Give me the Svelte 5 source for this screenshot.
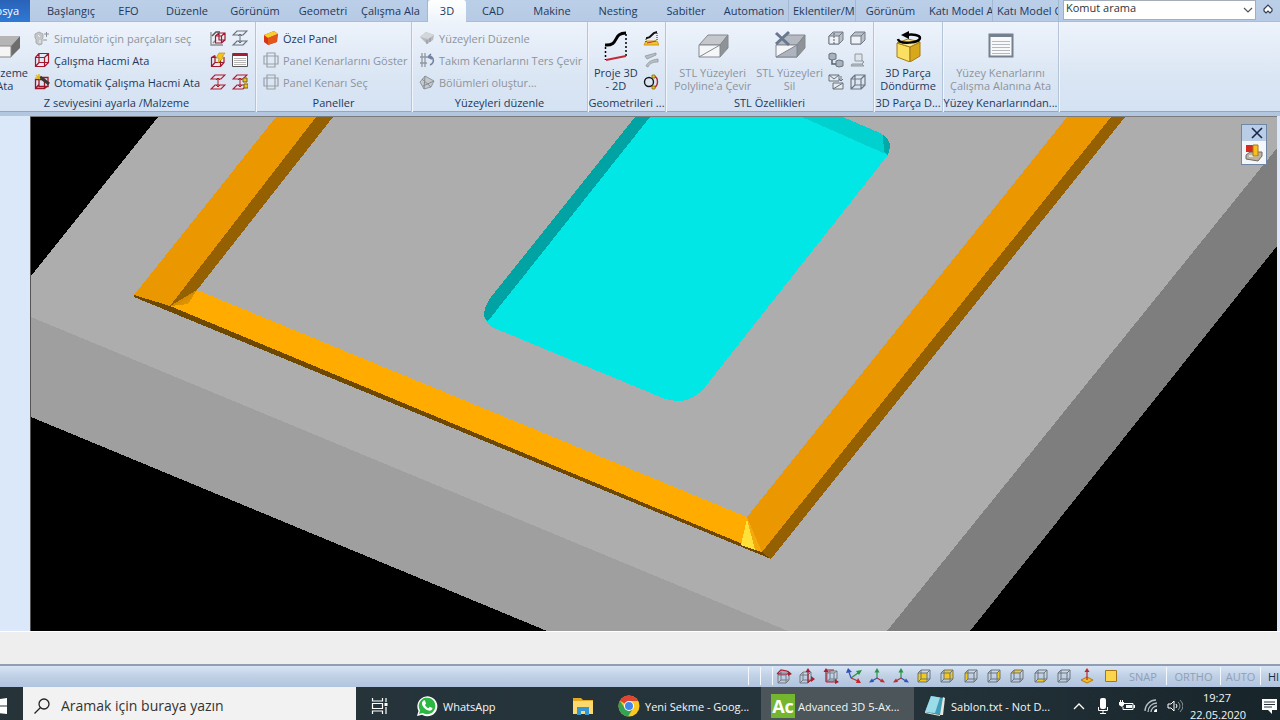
<script>
  const tabs = [
    'Başlangıç', 'EFO', 'Düzenle', 'Görünüm', 'Geometri', 'Çalışma Ala', '3D', 'CAD', 'Makine', 'Nesting',
    'Sabitler', 'Automation', 'Eklentiler/M', 'Görünüm', 'Katı Model A', 'Katı Model O'
  ];
  const divided = [5, 11, 12, 14, 15];
  const clipped = [5, 12, 14, 15];
  const materialRows = [
    { icon: 'simulator', label: 'Simulatör için parçaları seç', off: true },
    { icon: 'redcube', label: 'Çalışma Hacmi Ata' },
    { icon: 'autocube', label: 'Otomatik Çalışma Hacmi Ata' }
  ];
  const materialTools = [
    ['wizard', 'Hacim sihirbazı'], ['zgrey', 'Z seviyesi'], ['flashcube', 'Hızlı hacim'],
    ['list', 'Liste'], ['zred', 'Z seviyesi ata'], ['zkey', 'Z seviyesi düzenle']
  ];
  const panelRows = [
    { icon: 'panel', label: 'Özel Panel' },
    { icon: 'edges', label: 'Panel Kenarlarını Göster', off: true },
    { icon: 'edges', label: 'Panel Kenarı Seç', off: true }
  ];
  const surfaceRows = [
    { icon: 'surface', label: 'Yüzeyleri Düzenle', off: true },
    { icon: 'reverse', label: 'Takım Kenarlarını Ters Çevir', off: true },
    { icon: 'split', label: 'Bölümleri oluştur...', off: true }
  ];
  const geoTools = [['geo1', 'Yüzeye yansıt'], ['geo2', 'Yüzey eğrisi'], ['geo3', 'Kontur']];
  const stlTools = [
    ['stl1', 'STL böl'], ['stl2', 'STL kutu'], ['stl3', 'STL taşı'],
    ['stl4', 'STL gölge'], ['stl5', 'STL aktar'], ['stl6', 'STL tel kafes']
  ];
  const views = ['rot1', 'rot2', 'rot3', 'ax1', 'ax2', 'ax3', 'front', 'back', 'left', 'right', 'top', 'bottom', 'wire', 'normal', 'flat'];
  const faces = {
    front: '2,5 11,5 11,14 2,14', back: '5,2 14,2 14,11 5,11', left: '2,5 5,2 5,11 2,14',
    right: '11,5 14,2 14,11 11,14', top: '2,5 5,2 14,2 11,5', bottom: '2,14 5,11 14,11 11,14'
  };
</script>

{#snippet cube(color, fill)}
  {#if fill}<polygon points={fill} fill="#f3c91b" />{/if}
  <path d="M2 5h9v9H2zM5 2h9v9H5zM2 5l3-3M11 5l3-3M11 14l3-3M2 14l3-3" fill="none" stroke={color} />
{/snippet}

{#snippet axis(up, left, right)}
  <path d="M8 10V3" stroke={up} stroke-width="1.200" /><path d="M5.500 4.500L8 0l2.500 4.500z" fill={up} />
  <path d="M8 10l-5 3" stroke={left} stroke-width="1.200" /><path d="M0 14.500l3-4 2 3.500z" fill={left} />
  <path d="M8 10l5 3" stroke={right} stroke-width="1.200" /><path d="M16 14.500l-3-4-2 3.500z" fill={right} />
{/snippet}

{#snippet icon(name)}
  <svg class="i16" viewBox="0 0 16 16" aria-hidden="true">
    {#if name === 'simulator'}
      <path d="M1 4l4-2 4 2v4l-1 1v5l-3 1-3-2V9L1 8z" fill="#c4c6c8" stroke="#a9adb1" />
      <path d="M4 5l2 2M6 10v3" stroke="#f3f4f5" /><path d="M10 4h5M12.500 2v5M9 10h4" stroke="#8d9298" />
    {:else if name === 'redcube'}
      <path d="M1.500 5.500h9v9h-9zM5 1.500h9.500v9H5zM1.500 5.500l3.500-4M10.500 5.500l4-4M10.500 14.500l4-4M1.500 14.500l3.500-4" fill="none" stroke="#a3182c" stroke-width="1.200" />
    {:else if name === 'autocube'}
      <path d="M1.500 5.500h9v9h-9zM5 3.500h9v9H5zM10.500 14.500l4-3M1.500 14.500l3.500-4" fill="none" stroke="#9c1629" stroke-width="1.300" /><path d="M6 3l9 7" stroke="#3a3a32" stroke-width="3" /><path d="M2 1l4 4M5 0v5M1 4h5" stroke="#e6b719" stroke-width="1.500" />
    {:else if name === 'wizard'}
      <path d="M1 2v13h12M3 13l3-3" fill="none" stroke="#8b8f94" stroke-width="1.300" />
      <path d="M5.500 6h6v7h-6zM9 3h6v7H9zM5.500 6L9 3M11.500 6L15 3M11.500 13l3.500-3" fill="none" stroke="#a3182c" stroke-width="1.200" /><path d="M2 6l4-4h4" fill="none" stroke="#555" stroke-width="1.500" />
    {:else if name === 'flashcube'}
      <path d="M1.500 5.500h9v9h-9zM5 3.500v7h9M1.500 5.500l3.500-2M10.500 14.500l3.500-4V5M1.500 14.500l3.500-4" fill="none" stroke="#a3182c" stroke-width="1.200" /><path d="M9 1h6l-3 4h2L8 11l1-5H6z" fill="#f4c51c" stroke="#b98700" stroke-width=".6" />
    {:else if name === 'zgrey' || name === 'zred' || name === 'zkey'}
      {@const c = name === 'zgrey' ? '#68727d' : '#b01c2e'}
      <path d="M5 1h10l-4 4H1zM5 11h10l-4 4H1z" fill="none" stroke={c} stroke-width="1.200" /><path d="M8 4v9M6 6l2-2 2 2M6 11l2 2 2-2" fill="none" stroke={c} />
      {#if name === 'zkey'}<path d="M11 4h4v4h-4zM12 10h4v4h-4z" fill="#f2c21d" stroke="#7d611a" />{/if}
    {:else if name === 'list'}
      <path d="M.5 1.500h15v13H.5z" fill="#fff" stroke="#555" /><path d="M1 1h14v3H1z" fill="#a51d31" /><path d="M2 6.500h12M2 8.500h12M2 10.500h12M2 12.500h12" stroke="#b5b5b5" />
    {:else if name === 'panel'}
      <path d="M1 5l10-4 4 3-1 8-9 3-4-3z" fill="#d8331b" /><path d="M1 5l10-4 4 3-10 4z" fill="#f6cf2a" /><path d="M14.500 4l-1 8-8.500 3V8z" fill="#e4571b" />
    {:else if name === 'edges'}
      <path d="M4 1h8v14H4zM1 4h14v8H1z" fill="none" stroke="#9aa1a8" stroke-width="1.200" />
    {:else if name === 'surface'}
      <path d="M1 7l6-5 8 3-1 5-6 4z" fill="#b5babf" /><path d="M1 7l6-5 8 3-6 4z" fill="#d4d7da" /><path d="M8 10v4M11 8v4" stroke="#8e949b" />
    {:else if name === 'reverse'}
      <path d="M3 1v14M6 1v14M1 5h7M1 11h7" stroke="#9097a0" stroke-width="1.300" /><path d="M9 5c5-3 8 6 2 8M12 2L9 5l4 2" fill="none" stroke="#7484a5" stroke-width="1.700" />
    {:else if name === 'split'}
      <path d="M1 8l5-6 9 5-3 6-7 2z" fill="#c5c9cc" stroke="#91979d" /><path d="M6 2l-1 13M3 5l9 8M15 7l-11 5" stroke="#858c94" fill="none" />
    {:else if name === 'geo1'}
      <path d="M3 11h11l2 4H1z" fill="#f4c335" stroke="#cf9a15" /><path d="M3 8c6 1 4-5 11-6" fill="none" stroke="#111" stroke-width="2" /><path d="M3 9v4M14 3v8" stroke="#222" stroke-dasharray="1 1" /><path d="M4 13l9-2" stroke="#c32" />
    {:else if name === 'geo2'}
      <path d="M2 4l11-3v2L4 7zM3 14c2-4 5-6 12-7v3c-5 0-8 1-10 5z" fill="#b9c0c6" stroke="#8f979e" stroke-width=".8" />
    {:else if name === 'geo3'}
      <circle cx="6" cy="8" r="4.500" fill="none" stroke="#151515" stroke-width="1.400" /><path d="M10 2c6 1 6 10 0 12" fill="none" stroke="#b7282d" stroke-width="1.400" /><path d="M9 1h3v3H9zM9 12h3v3H9z" fill="#f5bd22" stroke="#7b5b12" stroke-width=".7" />
    {:else if name === 'stl1' || name === 'stl2'}
      <path d="M1 6l4-4h10v8l-4 4H1z" fill="#b9c0c8" stroke="#727b86" /><path d="M1 6h10v8H1z" fill="#eef2f6" stroke="#727b86" /><path d="M11 6l4-4" stroke="#727b86" />{#if name === 'stl1'}<path d="M6 3v12" stroke="#555e69" stroke-dasharray="2 1" />{/if}
    {:else if name === 'stl3'}
      <path d="M1 2l3-1 4 1v5L4 8 1 7zM8 9l3-1 4 1v5l-4 1-3-1z" fill="#a8b2bf" stroke="#68727e" /><path d="M4 8v4h4" fill="none" stroke="#56616d" stroke-width="1.500" />
    {:else if name === 'stl4'}
      <path d="M5 2h7v7H5z" fill="#dfe4e8" stroke="#9299a1" /><path d="M2 12h10l2 2H1zM12 8l2 2-2 2" fill="#bbc2c9" stroke="#9299a1" />
    {:else if name === 'stl5'}
      <path d="M1 1h10v6H1zM1 1l5 4 5-4M5 9h10v6H5zM5 15l10-6M13 2v5M11 5l2 2 2-2" fill="#e7ebf0" stroke="#66707b" />
    {:else if name === 'stl6'}
      <path d="M1 5h10v10H1zM5 1h10v10H5zM1 5l4-4M11 5l4-4M11 15l4-4M1 15l4-4" fill="none" stroke="#6f7883" stroke-width="1.200" />
    {:else if name === 'rot1'}
      <path d="M2 7h8v8H2zM5 4h8v8H5zM2 7l3-3M10 7l3-3M10 15l3-3M2 15l3-3" fill="none" stroke="#747b82" /><path d="M1 6l4-4 6 1 3 2M1 6h12" fill="none" stroke="#a91f30" stroke-width="1.200" /><path d="M12 3l4 3-4 2z" fill="#a91f30" />
    {:else if name === 'rot2'}
      <path d="M1 7h8v8H1zM4 4h8v8H4zM1 7l3-3M9 7l3-3M9 15l3-3M1 15l3-3" fill="none" stroke="#747b82" /><path d="M9 15V3M9 14l5-3" fill="none" stroke="#a91f30" stroke-width="1.200" /><path d="M6.500 4L9 0l2.500 4zM12 8l4 3-4 3z" fill="#a91f30" />
    {:else if name === 'rot3'}
      <path d="M4 5h7v8H4zM7 3h7v8H7zM4 5l3-2M11 5l3-2M11 13l3-2M4 13l3-2" fill="none" stroke="#747b82" /><path d="M3 14V2h8M3 14h10" fill="none" stroke="#a91f30" stroke-width="1.200" /><path d="M.5 4L3 0l2.500 4zM12 11l4 3-4 2z" fill="#a91f30" />
    {:else if name === 'ax1'}
      <path d="M5 10L3 4" stroke="#3450ba" stroke-width="1.200" /><path d="M0 5l2-5 4 4z" fill="#3450ba" /><path d="M5 10l7-5" stroke="#279343" stroke-width="1.200" /><path d="M10 3l6-1-3 5z" fill="#279343" /><path d="M5 10l7 3" stroke="#c12a31" stroke-width="1.200" /><path d="M12 10l3 5-5 0z" fill="#c12a31" />
    {:else if name === 'ax2'}
      {@render axis('#279343', '#3450ba', '#c12a31')}
    {:else if name === 'ax3'}
      {@render axis('#279343', '#c12a31', '#3450ba')}
    {:else if name === 'normal'}
      <path d="M2 12l6-3 6 3-6 3z" fill="#f5bc28" stroke="#b87516" /><path d="M8 12V3" stroke="#b52a27" stroke-width="1.200" /><path d="M5.500 4L8 0l2.500 4z" fill="#b52a27" />
    {:else if name === 'flat'}
      <path d="M2.500 2.500h11v11h-11z" fill="#fbd54b" stroke="#a37616" />
    {:else}
      {@render cube('#6d747b', faces[name])}
    {/if}
  </svg>
{/snippet}

{#snippet rows(list)}
  <div class="rows">
    {#each list as r}
      <button class="row" disabled={r.off}>{@render icon(r.icon)}<span>{r.label}</span></button>
    {/each}
  </div>
{/snippet}

{#snippet tools(list, off)}
  <div class="tools" class:two={list.length > 3}>
    {#each list as t}
      <button aria-label={t[1]} disabled={off}>{@render icon(t[0])}</button>
    {/each}
  </div>
{/snippet}

{#snippet block(c)}
  <path d="M2 15l9-10h20l-8 10z" fill={c} stroke="#84898f" /><path d="M23 15l8-10v13l-8 9z" fill="#8f9398" stroke="#84898f" /><path d="M2 15h21v12H2z" fill="#f4f6f8" stroke="#84898f" />
{/snippet}

<div class="app">
  <nav class="tabs">
    <div class="file"><button>Dosya</button></div>
    {#each tabs as t, i}
      <button class="tab" class:active={t === '3D'} class:divided={divided.includes(i)} class:clip={clipped.includes(i)}>{t}</button>
    {/each}
    <div class="search">
      <input aria-label="Komut arama" placeholder="Komut arama" />
      <svg viewBox="0 0 10 10" aria-hidden="true"><path d="M1 3l4 4 4-4" fill="none" stroke="#555" stroke-width="1.200" /></svg>
    </div>
    <button class="fold" aria-label="Şeridi daralt">
      <svg viewBox="0 0 10 10"><path d="M1 5l4-4 4 4v2L7 9 5 7 3 9 1 7z" fill="#fff" stroke="#334056" stroke-width="1.200" /></svg>
    </button>
  </nav>

  <div class="ribbon">
    <section class="group g1">
      <div class="body">
        <div class="cut">
          <button class="big">
            <svg class="i32" viewBox="0 0 32 32"><path d="M0 16l10-10h21l-9 10z" fill="#b5b5b5" /><path d="M22 16l9-10v12l-9 9z" fill="#6d6d6d" /><path d="M0 16h22v11H0z" fill="#f5f5f5" stroke="#888" /></svg>
            <span>Malzeme<br />Ata</span>
          </button>
        </div>
        {@render rows(materialRows)}
        {@render tools(materialTools)}
      </div>
      <h2>Z seviyesini ayarla /Malzeme</h2>
    </section>
    <section class="group g2"><div class="body">{@render rows(panelRows)}</div><h2>Paneller</h2></section>
    <section class="group g3"><div class="body">{@render rows(surfaceRows)}</div><h2>Yüzeyleri düzenle</h2></section>
    <section class="group g4">
      <div class="body">
        <button class="big">
          <svg class="i32" viewBox="0 0 32 32"><path d="M5 15c15 1 7-12 21-12" fill="none" stroke="#000" stroke-width="3" /><path d="M5.500 17v13M26 4v22" stroke="#000" stroke-width="1.500" stroke-dasharray="2 2" /><path d="M6 30l20-4" stroke="#c32a36" stroke-width="2" /></svg>
          <span>Proje 3D<br />- 2D</span>
        </button>
        {@render tools(geoTools)}
      </div>
      <h2>Geometrileri ...</h2>
    </section>
    <section class="group g5">
      <div class="body">
        <button class="big" disabled>
          <svg class="i32" viewBox="0 0 32 32">{@render block('#c4c8cc')}<path d="M2 27l21-12" stroke="#84898f" /></svg>
          <span>STL Yüzeyleri<br />Polyline'a Çevir</span>
        </button>
        <button class="big" disabled>
          <svg class="i32" viewBox="0 0 32 32">{@render block('#b5bac2')}<path d="M2 27l21-12v12z" fill="#aeb4bd" stroke="#7f8793" /><path d="M2 3l13 12M15 2L2 14" stroke="#69778f" stroke-width="3" /></svg>
          <span>STL Yüzeyleri<br />Sil</span>
        </button>
        {@render tools(stlTools, true)}
      </div>
      <h2>STL Özellikleri</h2>
    </section>
    <section class="group g6">
      <div class="body">
        <button class="big">
          <svg class="i32" viewBox="0 0 32 32"><path d="M5 13l13 4v15L5 27z" fill="#fbdf62" stroke="#a37c12" /><path d="M18 17l10-5v14l-10 6z" fill="#d9a81a" stroke="#a37c12" /><path d="M5 13l11-4 12 3-10 5z" fill="#fdeb9a" stroke="#a37c12" /><path d="M6 9c1 6 22 4 22-1 0-3-7-4-14-3" fill="none" stroke="#000" stroke-width="2.500" /><path d="M9 5l8-4v8z" fill="#000" /></svg>
          <span>3D Parça<br />Döndürme</span>
        </button>
      </div>
      <h2>3D Parça D...</h2>
    </section>
    <section class="group g7">
      <div class="body">
        <button class="big" disabled>
          <svg class="i32" viewBox="0 0 32 32"><path d="M4.500 4.500h23v22h-23z" fill="#f7f9fa" stroke="#77808e" stroke-width="2" /><path d="M4 4h24v3H4z" fill="#77808e" /><path d="M7 11.500h18M7 14.500h18M7 17.500h18M7 20.500h18M7 23.500h18" stroke="#b5b9bd" /></svg>
          <span>Yüzey Kenarlarını<br />Çalışma Alanına Ata</span>
        </button>
      </div>
      <h2>Yüzey Kenarlarından...</h2>
    </section>
  </div>

  <main class="work">
    <svg class="scene" viewBox="31 117 1246 514" preserveAspectRatio="xMinYMin slice" role="img" aria-label="3D parça görünümü">
      <defs>
        <linearGradient id="wedge" x1="0" y1="0" x2="1" y2="1"><stop offset="0" stop-color="#b27400" /><stop offset="1" stop-color="#f2a100" /></linearGradient>
      </defs>
      <path d="M31 117h1246v514H31z" fill="#000" />
      <path d="M158 117H1277V148L887 631H788L31 317V276z" fill="#adadad" />
      <path d="M31 317L788 631H547L31 417z" fill="#9f9f9f" />
      <path d="M1277 148V246L970 631H887z" fill="#7e7e7e" />
      <path d="M134 295L170 306 762 552 771 559 134 297z" fill="#6f4800" />
      <path d="M276 117H316L181 294 170 306 134 295z" fill="#eb9800" />
      <path d="M316 117H333L197 290 170 306z" fill="#946000" />
      <path d="M197 290L747 517 762 552 170 306z" fill="#ffab00" />
      <path d="M197 290L188 304 170 306z" fill="url(#wedge)" />
      <path d="M1067 117H1111L762 552 747 517z" fill="#eb9800" />
      <path d="M1111 117H1125L771 559 762 552z" fill="#946000" />
      <path d="M747 517L762 552 755 550z" fill="#f3a80b" />
      <path d="M747 519L741 545 755 550z" fill="#ffe13a" />
      <path d="M635 117H843L880 133Q890 138 890 147L888 155 705 387Q693 401 680 401 668 401 658 396L494 328Q484 324 484 313 485 305 491 297z" fill="#00e7e5" />
      <path d="M635 117H650L488 321Q484 319 484 313 485 305 491 297z" fill="#00a3a3" />
      <path d="M802 117H843L880 133Q890 138 890 147L888 155z" fill="#00d0ce" />
      <path d="M883 135Q890 139 890 147L888 155 884 152z" fill="#00aaa9" />
    </svg>
    <div class="float">
      <button aria-label="Kapat"><svg viewBox="0 0 12 12"><path d="M1 1l10 10M11 1L1 11" stroke="#17294a" stroke-width="1.600" /></svg></button>
      <button aria-label="Simülasyon">
        <svg viewBox="0 0 18 18"><path d="M1 11l4-3h12v4l-4 5-12-2z" fill="#b9b3a5" stroke="#716b5f" /><path d="M4 11h9v2H4z" fill="#e8e2d2" /><path d="M1 1h8v7H1z" fill="#d62a22" /><path d="M8 1h5v11H8z" fill="#f5bf22" stroke="#ad7710" /></svg>
      </button>
    </div>
  </main>

  <div class="prompt"></div>

  <footer class="status">
    <i></i><i></i>
    <div class="views">
      {#each views as v}<button aria-label={v}>{@render icon(v)}</button>{/each}
    </div>
    <button class="mode snap">SNAP</button>
    <button class="mode ortho">ORTHO</button>
    <button class="mode auto">AUTO</button>
    <button class="mode hilite">HIDE</button>
  </footer>

  <div class="taskbar">
    <button class="start" aria-label="Başlat"><svg viewBox="0 0 16 16"><path d="M0 2l7-1v6.500H0zM8 1l8-1v7.500H8zM0 8.500h7V15l-7-1zM8 8.500h8V16l-8-1z" fill="#fff" /></svg></button>
    <label class="find">
      <svg viewBox="0 0 16 16" aria-hidden="true"><circle cx="10" cy="6" r="5" fill="none" stroke="#222" stroke-width="1.300" /><path d="M6.500 9.500L.5 15.500" stroke="#222" stroke-width="1.300" /></svg>
      <input placeholder="Aramak için buraya yazın" aria-label="Aramak için buraya yazın" />
    </label>
    <button class="view" aria-label="Görev görünümü"><svg viewBox="0 0 17 16"><path d="M1.500 0v3h10V0M1.500 5.500h10v5h-10zM1.500 16v-3h10v3M15 0v4M15 9v7" fill="none" stroke="#fff" stroke-width="1.200" /><path d="M13.500 5h3v3h-3z" fill="#fff" /></svg></button>
    <button class="task whatsapp">
      <svg viewBox="0 0 22 22"><path d="M1 21l1.500-5A10 10 0 1 1 6 19.800z" fill="#fff" /><path d="M3 19l1-3.600A8.300 8.300 0 1 1 6.600 18z" fill="#2bb741" /><path d="M7 6c1-1 2-1 2.500 1l.5 1.500-1 1.500c1 2 2 2.500 3.500 3.200l1.300-1.400 2.700 1.200c0 2-2 3-4 2.500-4-1-7-5-6.500-8z" fill="#fff" /></svg>
      <span>WhatsApp</span>
    </button>
    <button class="task folder" aria-label="Dosya Gezgini">
      <svg viewBox="0 0 22 22"><path d="M1 3h8l2 2h10v14H1z" fill="#e5a823" /><path d="M1 6h20v13H1z" fill="#fbd96c" /><path d="M5 20v-8h12v8h-4v-4H9v4z" fill="#3595d5" /></svg>
    </button>
    <button class="task chrome">
      <svg viewBox="0 0 22 22"><circle cx="11" cy="11" r="10.500" fill="#fbc924" /><path d="M11 11L1.900 5.700A10.500 10.500 0 0 1 20.200 6H11z" fill="#df4534" /><path d="M1.900 5.700A10.500 10.500 0 0 0 10 21.500L15 13.500 7 13.500z" fill="#36a351" /><circle cx="11" cy="11" r="5" fill="#fff" /><circle cx="11" cy="11" r="4" fill="#4485ee" /></svg>
      <span>Yeni Sekme - Goog...</span>
    </button>
    <button class="task current"><b>Ac</b><span>Advanced 3D 5-Ax...</span></button>
    <button class="task notes">
      <svg viewBox="0 0 22 22"><path d="M7 1l13 2-3 17-16-3z" fill="#3d9fb9" /><path d="M7 1l9 1.500L11 18 1 17z" fill="#9bdce8" /><path d="M19 2l2 1-2 17-3 0z" fill="#e9e6dc" /><path d="M1 17l15 3v1L1 18z" fill="#e9e6dc" /></svg>
      <span>Sablon.txt - Not D...</span>
    </button>
    <div class="tray">
      <button aria-label="Gizli simgeler"><svg viewBox="0 0 16 16"><path d="M3 11l5-5 5 5" fill="none" stroke="#fff" stroke-width="1.300" /></svg></button>
      <button aria-label="Mikrofon"><svg viewBox="0 0 16 16"><rect x="5" y="0" width="6" height="11" rx="2" fill="#fff" /><path d="M3.500 9v3.500h9V9M8 12v3M5 15.500h6" fill="none" stroke="#fff" /></svg></button>
      <button aria-label="Pil"><svg viewBox="0 0 16 16"><path d="M5 5.500h9v6H4V9" fill="none" stroke="#fff" /><path d="M7 7h6v3H7zM14.500 7H16v3h-1.500zM0 4h5v3L3 9 0 7zM1 2h1v2H1zM3 2h1v2H3z" fill="#fff" /></svg></button>
      <button aria-label="Ağ"><svg viewBox="0 0 16 16"><path d="M2 13C2 7 7 2 13 2M5 14c0-5 4-9 9-9M8 14c0-3 3-6 6-6" fill="none" stroke="#b7c0c4" stroke-width="1.300" /><path d="M11 14c0-2 1-3 3-3v3z" fill="#fff" /></svg></button>
      <button aria-label="Ses"><svg viewBox="0 0 16 16"><path d="M1 6h3l3-3v10L4 10H1z" fill="none" stroke="#fff" /><path d="M9 6q2 2 0 4" fill="none" stroke="#fff" /><path d="M11 4q4 4 0 8M13 2q6 6 0 12" fill="none" stroke="#89959a" /></svg></button>
    </div>
    <time>19:27<br />22.05.2020</time>
    <button class="note" aria-label="Bildirimler"><svg viewBox="0 0 17 17"><path d="M1 1h15v11h-5v4l-4-4H1z" fill="#fff" /><path d="M3 4h11M3 6.500h11M3 9h8" stroke="#263238" /></svg></button>
  </div>
</div>

<style>
  :global(body) { margin: 0; }
  .app { height: 100vh; display: flex; flex-direction: column; overflow: hidden; font: 11px/13px "Open Sans", "Noto Sans", sans-serif; color: #1e395b; background: #eee; }
  button { border: 0; padding: 0; margin: 0; background: none; font: inherit; color: inherit; }
  svg { display: block; flex: none; }
  input { font: inherit; border: 0; outline: 0; background: none; padding: 0; min-width: 0; }
  .i16 { width: 16px; height: 16px; }
  .i32 { width: 32px; height: 32px; }

  .tabs { flex: none; height: 22px; display: grid; grid-template-columns: 30fr 8fr 66fr 49fr 68fr 68fr 68fr 71fr 38fr 54fr 64fr 68fr 68fr 69fr 67fr 69fr 68fr 66fr 4fr 193fr 24fr; background: linear-gradient(#bccfe8, #b6cae5); box-shadow: inset 0 -1px #a9bdda; }
  .file { display: flex; justify-content: flex-end; overflow: hidden; color: #fff; background: linear-gradient(#2a62b8, #2f79d5); }
  .file button { padding: 0 11px 2px 0; }
  .tab { min-width: 0; white-space: nowrap; overflow: hidden; padding: 0 0 2px; }
  .tab:nth-child(2) { grid-column: 3; }
  .tab.divided { border-right: 1px solid #a3b8d5; }
  .tab.clip { padding: 0 4px 2px; text-align: left; }
  .tab.active { background: linear-gradient(#fff, #eef4fb); border-radius: 3px 3px 0 0; }
  .search { grid-column: 20; display: flex; align-items: center; height: 20px; padding: 0 3px; background: #fff; box-shadow: inset 0 0 0 1px #a5adb8; box-sizing: border-box; color: #222; }
  .search input { flex: 1; height: 14px; margin-bottom: 6px; }
  .search input::placeholder, .find input::placeholder { color: #333; opacity: 1; }
  .search svg { width: 10px; height: 10px; }
  .fold { display: grid; place-items: center; padding-bottom: 4px; }
  .fold svg { width: 10px; height: 10px; }

  .ribbon { flex: none; display: flex; height: 90px; border-bottom: 4px solid #b3c6df; background: linear-gradient(#edf3fb, #dbe6f4 60%, #d4e2f3); box-shadow: inset 0 -1px #93a7c2; }
  .group { display: flex; flex-direction: column; box-sizing: border-box; border-right: 1px solid #b4c4d9; box-shadow: 1px 0 #f1f6fc; min-width: 0; }
  .g1 { flex: 0 0 256px; }
  .g2 { flex: 0 0 156px; }
  .g3 { flex: 0 0 176px; }
  .g4 { flex: 0 0 78px; }
  .g5 { flex: 0 0 208px; }
  .g6 { flex: 0 0 69px; }
  .g7 { flex: 0 0 116px; }
  .body { flex: 1; display: flex; padding-top: 5px; }
  h2 { margin: 0; height: 16px; font: inherit; text-align: center; white-space: nowrap; overflow: hidden; }
  .g1 h2 { padding-right: 22px; }
  .rows { display: grid; grid-template-rows: repeat(3, 22px); justify-items: start; padding-left: 7px; flex: 1; }
  .row { display: flex; align-items: center; gap: 4px; white-space: nowrap; }
  button:disabled { color: #8d949d; }
  .g1 .rows { padding-left: 4px; flex: none; width: 176px; }
  .tools { display: grid; grid-template-rows: repeat(3, 22px); align-items: center; }
  .tools.two { grid-template-columns: 22px 22px; }
  .big { display: flex; flex-direction: column; align-items: center; white-space: nowrap; gap: 4px; padding-top: 3px; align-self: flex-start; }
  .cut { width: 30px; display: flex; justify-content: flex-end; overflow: hidden; }
  .cut .big { padding-right: 2px; flex: none; }
  .g4 .body { justify-content: space-between; padding-left: 6px; padding-right: 6px; }
  .g5 .body { padding-left: 8px; gap: 5px; }
  .g6 .body, .g7 .body { justify-content: center; }

  .work { flex: 1; min-height: 0; display: flex; position: relative; padding: 1px 3px 0 30px; background: #dbe8fa; }
  .scene { flex: 1; min-width: 0; width: 100%; height: 100%; border-left: 1px solid #555; box-shadow: 0 -1px #7b7b7b; box-sizing: border-box; shape-rendering: crispEdges; }
  .float { position: absolute; right: 13px; top: 8px; width: 24px; border: 1px solid #6f86a6; background: #f3f7fc; }
  .float button { display: flex; width: 100%; height: 23px; align-items: center; justify-content: center; }
  .float button:first-child { height: 16px; background: #bacde6; justify-content: flex-end; padding-right: 3px; box-sizing: border-box; }
  .float button:first-child svg { width: 12px; height: 12px; }
  .float button:last-child svg { width: 18px; height: 18px; }
  .prompt { flex: none; height: 32px; background: #eee; border-top: 1px solid #fff; border-bottom: 1px solid #8f9fb1; }

  .status { flex: none; height: 22px; display: flex; justify-content: flex-end; align-items: center; overflow: hidden; background: linear-gradient(#d9e6f7, #c0d0e5 50%, #b1c4df); box-shadow: inset 0 1px #8f9fb1; }
  .status i { width: 11px; height: 18px; border-left: 1px solid #f4f8fd; }
  .views { display: flex; justify-content: space-between; width: 348px; box-sizing: border-box; padding: 1px 1px 1px 3px; border-left: 1px solid #f4f8fd; }
  .mode { height: 18px; color: #8f9fb7; border-right: 1px solid #f4f8fd; box-sizing: border-box; }
  .snap { width: 47px; }
  .ortho { width: 54px; }
  .auto { width: 40px; }
  .hilite { width: 19px; padding-left: 7px; color: #1e2b45; border: 0; overflow: hidden; text-align: left; }

  .taskbar { flex: none; height: 38px; margin-bottom: -5px; display: flex; color: #f4f6f7; background: linear-gradient(90deg, #26343a, #25333a 70%, #17252b); }
  .start { width: 23px; display: flex; align-items: center; justify-content: flex-end; overflow: hidden; padding-right: 16px; box-sizing: border-box; }
  .start svg { width: 16px; height: 16px; }
  .find { width: 333px; display: flex; align-items: center; gap: 11px; padding-left: 11px; box-sizing: border-box; background: #f2f2f2; font-size: 14px; line-height: 20px; }
  .find svg { width: 16px; height: 16px; }
  .find input { flex: 1; }
  .view { width: 47px; display: grid; place-items: center; }
  .view svg { width: 17px; height: 16px; }
  .task { display: flex; align-items: center; gap: 5px; box-sizing: border-box; white-space: nowrap; }
  .task svg { width: 22px; height: 22px; }
  .whatsapp { width: 156px; padding-left: 13px; }
  .folder { width: 48px; padding-left: 13px; }
  .chrome { width: 154px; padding-left: 11px; }
  .current { width: 153px; padding-left: 10px; gap: 3px; background: #4b555a; }
  .current b { width: 24px; height: 24px; background: #74b62e; color: #fff; font: bold 18px/25px "Open Sans", sans-serif; }
  .notes { width: 154px; padding-left: 10px; }
  .tray { flex: 1; display: flex; align-items: center; justify-content: flex-end; gap: 8px; padding-right: 7px; }
  .tray svg { width: 16px; height: 16px; }
  time { width: 54px; text-align: center; line-height: 17px; padding-top: 2px; }
  .note { width: 36px; display: flex; align-items: center; justify-content: flex-end; padding-right: 2px; box-sizing: border-box; }
  .note svg { width: 17px; height: 17px; }
</style>
